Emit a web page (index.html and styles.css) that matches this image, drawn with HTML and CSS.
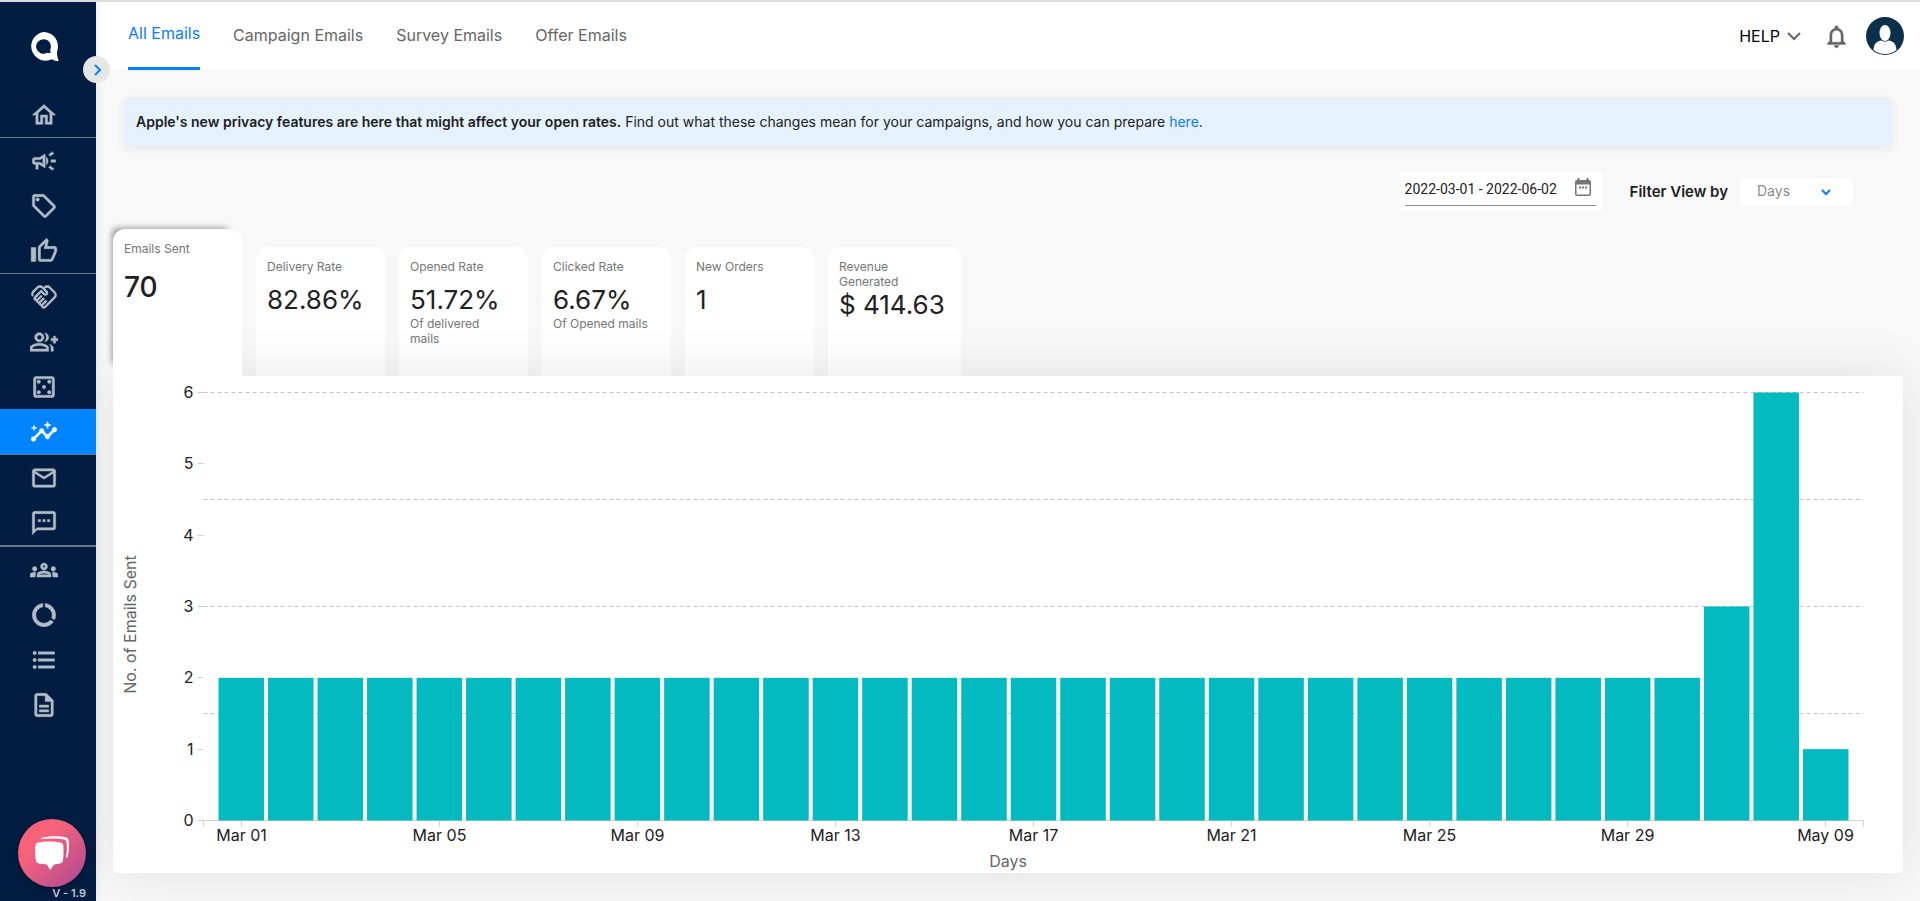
FILE: index.html
```html
<!DOCTYPE html>
<html lang="en">
<head>
    <meta charset="UTF-8">
    <meta name="viewport" content="width=device-width, initial-scale=1.0">
    <title>All Emails</title>
    <link rel="stylesheet" href="styles.css">
    <script src="chart.js" defer></script>
</head>
<body>
    <!-- Sidebar -->
    <aside class="sidebar">
        <a href="#" class="logo" aria-label="Home">
            <svg viewBox="0 0 30 30" width="30" height="30"><path fill-rule="evenodd" d="M14.500 0a14.400 14.400 0 0 1 13.800 18.700c-.8 3 .1 6.800 1.400 10.300-2.600 0-5-.4-6.800-1.800A14.400 14.400 0 1 1 14.500 0zM14.500 7.200a7.300 7.300 0 1 0 3.600 13.600c1 .2 2.600.4 3.600.2-.5-1.200-.7-2.400-.4-3.600A7.300 7.300 0 0 0 14.500 7.200z"/></svg>
        </a>
        <button type="button" class="toggle" aria-label="Expand menu">
            <svg viewBox="0 0 12 12" width="12" height="12"><path d="M4 1l5 5-5 5"/></svg>
        </button>

        <nav class="menu">
            <a href="#" class="line" aria-label="Dashboard"><svg viewBox="0 0 24 24"><path d="M12 5.69l5 4.5V18h-2v-6H9v6H7v-7.81l5-4.5M12 3L2 12h3v8h6v-6h2v6h6v-8h3L12 3z"/></svg></a>
            <a href="#" aria-label="Campaigns"><svg viewBox="0 0 24 24"><path d="M18 11v2h4v-2h-4zm-2 6.61c.96.71 2.21 1.65 3.2 2.39.4-.53.8-1.07 1.2-1.6-.99-.74-2.24-1.68-3.2-2.4-.4.54-.8 1.08-1.2 1.61zM20.4 5.6c-.4-.53-.8-1.07-1.2-1.6-.99.74-2.24 1.68-3.2 2.4.4.53.8 1.07 1.2 1.6.96-.72 2.21-1.65 3.2-2.4zM4 9c-1.1 0-2 .9-2 2v2c0 1.1.9 2 2 2h1v4h2v-4h1l5 3V6L8 9H4zm5.03 1.71L11 9.53v4.94l-1.97-1.18-.48-.29H4v-2h4.55l.48-.29zM15.5 12c0-1.33-.58-2.53-1.5-3.35v6.69c.92-.81 1.5-2.01 1.5-3.34z"/></svg></a>
            <a href="#" aria-label="Offers"><svg viewBox="0 0 24 24"><path d="M21.41 11.41l-8.83-8.83C12.21 2.21 11.7 2 11.17 2H4c-1.1 0-2 .9-2 2v7.17c0 .53.21 1.04.59 1.41l8.83 8.83c.78.78 2.05.78 2.83 0l7.17-7.17c.78-.78.78-2.04-.01-2.83zM12.83 20L4 11.17V4h7.17L20 12.83 12.83 20z"/><circle cx="6.5" cy="6.5" r="1.5"/></svg></a>
            <a href="#" class="line" aria-label="Reviews"><svg viewBox="0 0 24 24"><path d="M9 21h9c.83 0 1.54-.5 1.84-1.22l3.02-7.05c.09-.23.14-.47.14-.73v-2c0-1.1-.9-2-2-2h-6.31l.95-4.57.03-.32c0-.41-.17-.79-.44-1.06L14.17 1 7.58 7.59C7.22 7.95 7 8.45 7 9v10c0 1.1.9 2 2 2zM9 9l4.34-4.34L12 10h9v2l-3 7H9V9zM1 9h4v12H1z"/></svg></a>
            <a href="#" class="thin" aria-label="Loyalty"><svg viewBox="0 0 24 24"><path d="M12.22 19.85c-.18.18-.5.21-.71 0-.18-.18-.21-.5 0-.71l3.39-3.39-1.41-1.41-3.39 3.39c-.19.2-.51.19-.71 0-.21-.21-.18-.53 0-.71l3.39-3.39-1.41-1.41-3.39 3.39c-.18.18-.5.21-.71 0-.19-.19-.19-.51 0-.71l3.39-3.39L9.52 10.1l-3.39 3.39c-.18.18-.5.21-.71 0-.19-.2-.19-.51 0-.71L9.52 8.4l1.87 1.86c.95.95 2.59.94 3.54 0 .98-.98.98-2.56 0-3.54l-1.86-1.86.28-.28c.78-.78 2.05-.78 2.83 0l4.24 4.24c.78.78.78 2.05 0 2.83l-8.2 8.2zM21.83 13.07c1.56-1.56 1.56-4.09 0-5.66l-4.24-4.24c-1.56-1.56-4.09-1.56-5.66 0l-.28.28-.28-.28c-1.56-1.56-4.09-1.56-5.66 0L2.17 6.71c-1.42 1.42-1.55 3.63-.4 5.19l1.45-1.45c-.39-.75-.26-1.7.37-2.33l3.54-3.54c.78-.78 2.05-.78 2.83 0l3.56 3.56c.18.18.21.5 0 .71-.21.21-.53.18-.71 0L9.52 5.57l-5.8 5.79c-.98.97-.98 2.56 0 3.54.39.39.89.63 1.42.7.07.52.3 1.02.7 1.42.4.4.9.63 1.42.7.07.52.3 1.02.7 1.42.4.4.9.63 1.42.7.07.54.31 1.03.7 1.42.47.47 1.1.73 1.77.73s1.3-.26 1.77-.73l8.21-8.19z"/></svg></a>
            <a href="#" aria-label="Referrals"><svg viewBox="0 0 24 24"><path d="M22 9V7h-2v2h-2v2h2v2h2v-2h2V9zM8 12c2.21 0 4-1.79 4-4s-1.79-4-4-4-4 1.79-4 4 1.79 4 4 4zm0-6c1.1 0 2 .9 2 2s-.9 2-2 2-2-.9-2-2 .9-2 2-2zm0 7c-2.67 0-8 1.34-8 4v3h16v-3c0-2.66-5.33-4-8-4zm6 5H2v-.99C2.2 16.29 5.3 15 8 15s5.8 1.29 6 2v1zM12.51 4.05C13.43 5.11 14 6.49 14 8s-.57 2.89-1.49 3.95C14.47 11.7 16 10.04 16 8s-1.53-3.7-3.49-3.95zM16.53 13.83C17.42 14.66 18 15.7 18 17v3h2v-3c0-1.45-1.59-2.51-3.47-3.17z"/></svg></a>
            <a href="#" aria-label="Games"><svg viewBox="0 0 24 24"><path d="M19 3H5c-1.1 0-2 .9-2 2v14c0 1.1.9 2 2 2h14c1.1 0 2-.9 2-2V5c0-1.1-.9-2-2-2zm0 16H5V5h14v14z"/><circle cx="7.5" cy="7.5" r="1.5"/><circle cx="16.5" cy="7.5" r="1.5"/><circle cx="12" cy="12" r="1.5"/><circle cx="7.5" cy="16.5" r="1.5"/><circle cx="16.5" cy="16.5" r="1.5"/></svg></a>
            <a href="#" class="line active" aria-label="Insights"><svg viewBox="0 0 24 24"><path d="M21 8c-1.45 0-2.26 1.44-1.93 2.51l-3.55 3.56c-.3-.09-.74-.09-1.04 0l-2.55-2.55C12.27 10.45 11.46 9 10 9c-1.45 0-2.27 1.44-1.93 2.52l-4.56 4.55C2.44 15.74 1 16.55 1 18c0 1.1.9 2 2 2 1.45 0 2.26-1.44 1.93-2.51l4.55-4.56c.3.09.74.09 1.04 0l2.55 2.55C12.73 16.55 13.54 18 15 18c1.45 0 2.27-1.44 1.93-2.52l3.56-3.55C21.56 12.26 23 11.45 23 10c0-1.1-.9-2-2-2zM15 9l.94-2.07L18 6l-2.06-.93L15 3l-.92 2.07L12 6l2.08.93zM3.5 11L4 9l2-.5L4 8l-.5-2L3 8l-2 .5L3 9z"/></svg></a>
            <a href="#" aria-label="Emails"><svg viewBox="0 0 24 24"><path d="M22 6c0-1.1-.9-2-2-2H4c-1.1 0-2 .9-2 2v12c0 1.1.9 2 2 2h16c1.1 0 2-.9 2-2V6zm-2 0l-8 5-8-5h16zm0 12H4V8l8 5 8-5v10z"/></svg></a>
            <a href="#" class="line thick" aria-label="Messages"><svg viewBox="0 0 24 24"><path d="M20 2H4c-1.1 0-2 .9-2 2v18l4-4h14c1.1 0 2-.9 2-2V4c0-1.1-.9-2-2-2zm0 14H6l-2 2V4h16v12zM7 9h2v2H7zm4 0h2v2h-2zm4 0h2v2h-2z"/></svg></a>
            <a href="#" aria-label="Customers"><svg viewBox="0 0 24 24"><path d="M4 13c1.1 0 2-.9 2-2s-.9-2-2-2-2 .9-2 2 .9 2 2 2zm1.13 1.1C4.76 14.04 4.39 14 4 14c-.99 0-1.93.21-2.78.58C.48 14.9 0 15.62 0 16.43V18h4.5v-1.61c0-.83.23-1.61.63-2.29zM20 13c1.1 0 2-.9 2-2s-.9-2-2-2-2 .9-2 2 .9 2 2 2zm4 3.43c0-.81-.48-1.53-1.22-1.85-.85-.37-1.79-.58-2.78-.58-.39 0-.76.04-1.13.1.4.68.63 1.46.63 2.29V18H24v-1.57zM16.24 13.65C15.07 13.13 13.63 12.75 12 12.75s-3.07.39-4.24.9C6.68 14.13 6 15.21 6 16.39V18h12v-1.61c0-1.18-.68-2.26-1.76-2.74zM8.07 16c.09-.23.13-.39.91-.69.97-.38 1.99-.56 3.02-.56s2.05.18 3.02.56c.77.3.81.46.91.69H8.07zM12 8c.55 0 1 .45 1 1s-.45 1-1 1-1-.45-1-1 .45-1 1-1m0-2c-1.66 0-3 1.34-3 3s1.34 3 3 3 3-1.34 3-3-1.34-3-3-3z"/></svg></a>
            <a href="#" aria-label="Usage"><svg viewBox="0 0 24 24"><path d="M13 2.05v3.03c3.39.49 6 3.39 6 6.92 0 .9-.18 1.75-.48 2.54l2.6 1.53c.56-1.24.88-2.62.88-4.07 0-5.18-3.95-9.45-9-9.95zM12 19c-3.87 0-7-3.13-7-7 0-3.53 2.61-6.43 6-6.92V2.05c-5.06.5-9 4.76-9 9.95 0 5.52 4.47 10 9.99 10 3.31 0 6.24-1.61 8.06-4.09l-2.6-1.53C16.17 17.98 14.21 19 12 19z"/></svg></a>
            <a href="#" aria-label="Lists"><svg viewBox="0 0 24 24"><path d="M7 5h14v2H7zm0 6h14v2H7zm0 6h14v2H7z"/><circle cx="4" cy="6" r="1.5"/><circle cx="4" cy="12" r="1.5"/><circle cx="4" cy="18" r="1.5"/></svg></a>
            <a href="#" aria-label="Reports"><svg viewBox="0 0 24 24"><path d="M8 16h8v2H8zm0-4h8v2H8zm6-10H6c-1.1 0-2 .9-2 2v16c0 1.1.89 2 1.99 2H18c1.1 0 2-.9 2-2V8l-6-6zm4 18H6V4h7v5h5v11z"/></svg></a>
        </nav>

        <div class="sidebar-bottom">
            <button type="button" class="chat" aria-label="Open chat">
                <svg viewBox="0 0 36 36" width="36" height="36"><path d="M7.5 3C14 .8 25 .6 31.500 2.200c2 .5 3 1.800 3.200 3.800.5 5 .4 10-.8 15-.3 1-1 1.600-2 1.800 1-5 1.200-10 .8-15-.2-2-1-3-3-3.400C23 3.200 14 3.400 6.500 4.300z"/><path d="M4 7.600c7-1.600 16-1.600 22.500 0 1.800.4 2.600 1.400 2.800 3.200.5 5 .4 10-.4 14.600-.3 1.600-1.200 2.600-2.800 3-2 .5-4 .8-6 1L16.200 35l-3.400-5.600c-2.800-.2-5.400-.5-8-1-1.800-.4-2.600-1.400-2.900-3C1 20.500 1 15.500 1.400 10.800 1.600 9 2.400 8 4 7.600z"/></svg>
            </button>
            <span class="version">V - 1.9</span>
        </div>
    </aside>

    <div class="page">
        <!-- Header -->
        <header class="header">
            <nav class="tabs">
                <a href="#" class="active">All Emails</a>
                <a href="#">Campaign Emails</a>
                <a href="#">Survey Emails</a>
                <a href="#">Offer Emails</a>
            </nav>
            <div class="account">
                <button type="button" class="help">HELP
                    <svg viewBox="0 0 14 14" width="14" height="14"><path d="M1 4l6 6 6-6"/></svg>
                </button>
                <button type="button" class="bell" aria-label="Notifications">
                    <svg viewBox="0 0 24 24" width="27" height="27"><path d="M12 22c1.1 0 2-.9 2-2h-4c0 1.1.9 2 2 2zm6-6v-5c0-3.07-1.63-5.64-4.5-6.32V4c0-.83-.67-1.5-1.5-1.5s-1.5.67-1.5 1.5v.68C7.64 5.36 6 7.92 6 11v5l-2 2v1h16v-1l-2-2zm-2 1H8v-6c0-2.48 1.51-4.5 4-4.5s4 2.02 4 4.5v6z"/></svg>
                </button>
                <button type="button" class="avatar" aria-label="Profile">
                    <svg viewBox="0 0 38 38" width="38" height="38"><circle cx="19" cy="19" r="19" fill="#0b304c"/><ellipse cx="19" cy="16" rx="5.5" ry="8" fill="#fff"/><path fill="#fff" d="M7.500 33c.3-6 3-9 8-9.600 2.200 1.600 4.800 1.600 7 0 5 .6 7.700 3.600 8 9.600A18.200 18.200 0 0 1 7.500 33z"/></svg>
                </button>
            </div>
        </header>

        <main class="content">
            <!-- Notice -->
            <p class="notice"><strong>Apple's new privacy features are here that might affect your open rates.</strong> Find out what these changes mean for your campaigns, and how you can prepare <a href="#">here</a>.</p>

            <!-- Filters -->
            <form class="filters">
                <div class="date-box">
                    <div class="date-field">
                        <input type="text" value="2022-03-01 - 2022-06-02" aria-label="Date range">
                        <button type="button" aria-label="Pick dates">
                            <svg viewBox="0 0 16 18" width="16" height="18"><path fill-rule="evenodd" d="M2.500 0h2v2h7V0h2v2H14a2 2 0 0 1 2 2v12a2 2 0 0 1-2 2H2a2 2 0 0 1-2-2V4a2 2 0 0 1 2-2h.5zM1.500 6.500v10h13v-10zM4 8.500h2v2H4zm3 0h2v2H7zm3 0h2v2h-2z"/></svg>
                        </button>
                    </div>
                </div>
                <label for="viewBy">Filter View by</label>
                <div class="select-box">
                    <select id="viewBy">
                        <option>Days</option>
                        <option>Weeks</option>
                        <option>Months</option>
                    </select>
                    <svg viewBox="0 0 10 10" width="10" height="10"><path d="M1 3l4 4 4-4"/></svg>
                </div>
            </form>

            <!-- Stats -->
            <div class="stats">
                <button type="button" class="stat active">
                    <span class="name">Emails Sent</span>
                    <span class="value">70</span>
                </button>
                <button type="button" class="stat">
                    <span class="name">Delivery Rate</span>
                    <span class="value">82.86%</span>
                </button>
                <button type="button" class="stat">
                    <span class="name">Opened Rate</span>
                    <span class="value">51.72%</span>
                    <span class="note">Of delivered mails</span>
                </button>
                <button type="button" class="stat">
                    <span class="name">Clicked Rate</span>
                    <span class="value">6.67%</span>
                    <span class="note">Of Opened mails</span>
                </button>
                <button type="button" class="stat">
                    <span class="name">New Orders</span>
                    <span class="value">1</span>
                </button>
                <button type="button" class="stat wide">
                    <span class="name">Revenue Generated</span>
                    <span class="value">$ 414.63</span>
                </button>
            </div>

            <!-- Chart, drawn by chart.js -->
            <section class="chart" id="chart"></section>
        </main>
    </div>
</body>
</html>
```
FILE: styles.css
```css
/* General Reset */
* {
    margin: 0;
    padding: 0;
    box-sizing: border-box;
}

body {
    display: flex;
    min-height: 100vh;
    border-top: 2px solid #dcdcdc;
    background: #f8f8f8;
    color: #212121;
    font-family: Inter, "Work Sans", sans-serif;
    font-size: 14px;
}

button, input, select {
    border: none;
    background: none;
    color: inherit;
    font: inherit;
}

button {
    cursor: pointer;
}

a {
    text-decoration: none;
}

/* Sidebar */
.sidebar {
    position: relative;
    z-index: 5;
    display: flex;
    flex-direction: column;
    flex-shrink: 0;
    width: 96px;
    background: #021d41;
    box-shadow: 0 0 10px rgba(0, 0, 0, 0.1);
}

.logo {
    height: 90px;
    padding: 30px 0 0 29px;
    fill: white;
}

.toggle {
    position: absolute;
    top: 54px;
    right: -14px;
    width: 27px;
    height: 27px;
    border-radius: 50%;
    background: #e6e6e6;
}

.toggle svg {
    display: block;
    margin: 0 auto;
    fill: none;
    stroke: #0084ff;
    stroke-width: 2;
}

.menu a {
    display: block;
    padding: 9px 30px 8px;
    height: 45px;
    fill: #b3bbc6;
    stroke: #b3bbc6;
    stroke-width: 0.4;
}

.menu svg {
    display: block;
    width: 28px;
    height: 28px;
}

.menu .line {
    height: 46px;
    border-bottom: 1px solid #67778d;
}

.menu .thick {
    height: 47px;
    border-bottom-width: 2px;
}

.menu .thin {
    stroke: none;
}

.menu .active {
    background: #0084ff;
    fill: white;
    stroke: white;
}

.sidebar-bottom {
    display: flex;
    flex-direction: column;
    align-items: flex-end;
    margin-top: auto;
    padding: 0 10px 1px;
}

.chat {
    width: 68px;
    height: 68px;
    border-radius: 50%;
    background: linear-gradient(135deg, #f5627a 35%, #ab4797);
    box-shadow: 0 2px 8px rgba(0, 0, 0, 0.3);
}

.chat svg {
    display: block;
    margin: 0 auto;
    fill: white;
}

.version {
    color: #c0c7d0;
    font-size: 11px;
    font-weight: 600;
    line-height: 13px;
}

/* Header */
.page {
    flex: 1;
    min-width: 0;
}

.header {
    display: flex;
    justify-content: space-between;
    align-items: center;
    height: 68px;
    padding: 0 16px 0 32px;
    background: white;
}

.tabs {
    display: flex;
    gap: 33px;
    font-size: 16px;
}

.tabs a {
    height: 68px;
    color: #666;
    line-height: 67px;
}

.tabs .active {
    border-bottom: 3px solid #0084ff;
    color: #0a7cff;
    line-height: 63px;
}

.account {
    display: flex;
    align-items: center;
}

.help {
    display: flex;
    align-items: center;
    gap: 7px;
    color: black;
    font-size: 16px;
}

.help svg {
    fill: none;
    stroke: #666;
    stroke-width: 2;
}

.bell {
    margin: 0 16px 0 22px;
    fill: #666;
    stroke: #666;
    stroke-width: 0.4;
}

.bell svg, .avatar svg {
    display: block;
}

/* Notice */
.content {
    padding: 28px 17px;
}

.notice {
    margin: 0 11px;
    padding: 0 12px 2px;
    border-radius: 5px;
    background: #e5f1fd;
    box-shadow: 0 2px 10px rgba(0, 0, 0, 0.07);
    line-height: 47px;
}

.notice strong {
    font-weight: 600;
}

.notice a {
    color: #0a7cff;
}

/* Filters */
.filters {
    display: flex;
    justify-content: flex-end;
    align-items: center;
    margin: 25px 50px 18px 0;
}

.date-box {
    padding: 0 6px 5px 5px;
    margin-right: 28px;
    background: white;
}

.date-field {
    display: flex;
    align-items: center;
    width: 191px;
    height: 34px;
    border-bottom: 1px solid #8c8c8c;
    font-family: Roboto, sans-serif;
}

.date-field input {
    flex: 1;
    min-width: 0;
    height: 34px;
    outline: none;
}

.date-field button {
    height: 18px;
    margin: 0 5px 4px 0;
    fill: #757575;
}

.date-field svg {
    display: block;
}

.filters label {
    margin-right: 12px;
    font-size: 15px;
    font-weight: 600;
}

.select-box {
    position: relative;
    width: 113px;
    border-radius: 4px;
    background: white;
}

.select-box select {
    display: block;
    width: 100%;
    height: 28px;
    padding: 0 0 2px 17px;
    color: #8c8c8c;
    font-size: 14px;
    appearance: none;
    outline: none;
}

.select-box svg {
    position: absolute;
    top: 9px;
    right: 22px;
    fill: none;
    stroke: #0a7cff;
    stroke-width: 2;
    pointer-events: none;
}

/* Stats */
.stats {
    display: flex;
    align-items: flex-end;
    gap: 14px;
}

.stat {
    display: flex;
    flex-direction: column;
    min-width: 129px;
    height: 129px;
    padding: 12px 11px 0;
    border-radius: 12px 12px 0 0;
    background: white;
    font-size: 12px;
    line-height: 15px;
    text-align: left;
}

.stat.wide {
    min-width: 133px;
}

.stat .name {
    width: 90px;
    min-height: 25px;
    color: #757575;
}

.stat .value {
    font-size: 26px;
    line-height: 32px;
}

.stat .note {
    width: 105px;
    padding-right: 4px;
    color: #757575;
}

.stat.active {
    position: relative;
    z-index: 2;
    height: 147px;
    box-shadow: -7px -7px 6px -6px rgba(0, 0, 0, 0.4);
}

.stat.active .value {
    font-size: 28px;
    font-weight: 500;
    line-height: 42px;
}

/* Chart */
.chart {
    position: relative;
    z-index: 1;
    height: 497px;
    background: white;
    box-shadow: 0 0 50px rgba(0, 0, 0, 0.1);
}

.chart svg {
    display: block;
    width: 100%;
    height: 100%;
}

.chart text {
    fill: #212121;
    font-size: 16px;
}

.chart .title {
    fill: #666;
}

.chart .bar {
    fill: #02babf;
}

.chart .grid {
    stroke: #c4c4c4;
    stroke-dasharray: 4 3;
}

.chart .axis {
    stroke: #d0d0d0;
}
```
FILE: chart.js
```js
// Emails sent per day
const days = [];
for (let i = 1; i <= 30; i++) {
    days.push({ label: 'Mar ' + String(i).padStart(2, '0'), sent: 2 });
}
days.push({ label: 'Mar 31', sent: 3 });
days.push({ label: 'May 08', sent: 6 });
days.push({ label: 'May 09', sent: 1 });

const box = document.getElementById('chart');

function line(cls, x1, y1, x2, y2) {
    return `<line class="${cls}" x1="${x1}" y1="${y1}" x2="${x2}" y2="${y2}"/>`;
}

function text(x, y, anchor, value) {
    return `<text x="${x}" y="${y}" text-anchor="${anchor}">${value}</text>`;
}

function drawChart() {
    const left = 90.5;
    const right = box.clientWidth - 39.5;
    const top = 16.5;
    const bottom = box.clientHeight - 52.5;
    const max = 6;
    const unit = (bottom - top) / max;
    const start = left + 13;
    const band = (right - 13 - start) / days.length;
    let out = '';

    // Grid lines
    for (let v = 0; v <= max; v += 1.5) {
        const y = Math.floor(bottom - v * unit) + 0.5;
        out += line('grid', left, y, right, y);
    }

    // Y axis
    for (let v = 0; v <= max; v++) {
        const y = Math.floor(bottom - v * unit) + 0.5;
        out += line('axis', left - 6, y, left, y);
        out += text(left - 10, y + 5, 'end', v);
    }

    // Bars and X axis
    out += line('axis', left, bottom, right, bottom);
    out += line('axis', left, bottom, left, bottom + 6);
    out += line('axis', right, bottom, right, bottom + 6);
    days.forEach((day, i) => {
        const x = start + i * band;
        const h = day.sent * unit;
        out += `<rect class="bar" x="${x + 2}" y="${bottom - h}" width="${band - 4}" height="${h}"/>`;
        if (i % 4 === 0) {
            const mid = Math.floor(x + band / 2) + 0.5;
            out += line('axis', mid, bottom, mid, bottom + 6);
            out += text(mid, bottom + 20, 'middle', day.label);
        }
    });

    // Axis titles
    out += `<text class="title" x="${box.clientWidth / 2}" y="${bottom + 46}" text-anchor="middle">Days</text>`;
    out += `<text class="title" transform="translate(23 ${box.clientHeight / 2}) rotate(-90)" text-anchor="middle">No. of Emails Sent</text>`;

    box.innerHTML = `<svg role="img" aria-label="Emails sent by day">${out}</svg>`;
}

drawChart();
window.addEventListener('resize', drawChart);
```
